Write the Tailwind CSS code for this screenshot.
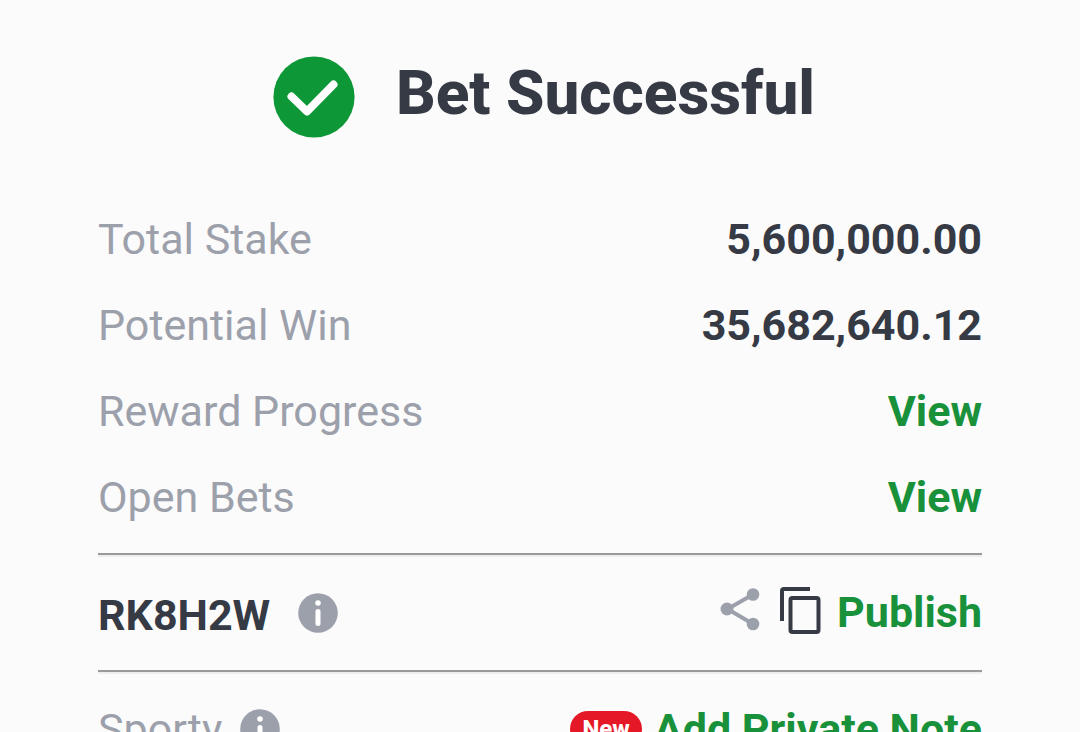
<!DOCTYPE html>
<html lang="en">
<head>
<meta charset="utf-8">
<meta name="viewport" content="width=device-width, initial-scale=1">
<title>Bet Successful</title>
<script src="https://cdn.jsdelivr.net/npm/@tailwindcss/browser@4"></script>
</head>
<body class="h-screen overflow-hidden bg-[#fbfbfb] font-[Roboto,sans-serif] text-[#353a45]">
<main class="px-[98px] pt-12 text-[43px] leading-[50px]">
  <header class="flex items-center justify-center gap-[41px] pl-2">
    <svg class="mt-2 size-[82px]" viewBox="0 0 82 82" aria-hidden="true">
      <circle cx="41" cy="41" r="40.6" fill="#0d9737"/>
      <path d="M18.5 40.5 L34 55.5 L60.5 28.5" fill="none" stroke="#fff" stroke-width="8" stroke-linecap="round" stroke-linejoin="round"/>
    </svg>
    <h1 class="text-[62px] leading-[82px] font-extrabold">Bet Successful</h1>
  </header>
  <dl class="pt-[58px]">
    <div class="flex h-[86px] items-center justify-between">
      <dt class="text-[#9ca0ab]">Total Stake</dt>
      <dd class="font-bold">5,600,000.00</dd>
    </div>
    <div class="flex h-[86px] items-center justify-between">
      <dt class="text-[#9ca0ab]">Potential Win</dt>
      <dd class="font-bold">35,682,640.12</dd>
    </div>
    <div class="flex h-[86px] items-center justify-between">
      <dt class="text-[#9ca0ab]">Reward Progress</dt>
      <dd><a href="#rewards" class="font-bold text-[#18913a]">View</a></dd>
    </div>
    <div class="flex h-[86px] items-center justify-between">
      <dt class="text-[#9ca0ab]">Open Bets</dt>
      <dd><a href="#bets" class="font-bold text-[#18913a]">View</a></dd>
    </div>
  </dl>
  <hr class="mt-[13px] h-1 border-t-2 border-b-2 border-t-[#99999b] border-b-[#eeeeee]">
  <section class="flex h-[113px] items-center justify-between">
    <div class="flex items-center gap-7 pb-0.5">
      <span class="pt-1 font-bold">RK8H2W</span>
      <button type="button" aria-label="About booking code">
        <svg class="size-10" viewBox="0 0 40 40"><circle cx="20" cy="20" r="19.8" fill="#9ca0ab"/><circle cx="20" cy="10" r="2.8" fill="#fff"/><path d="M20 18.5V30.5" stroke="#fff" stroke-width="5" stroke-linecap="round"/></svg>
      </button>
    </div>
    <div class="flex items-center pb-1">
      <button type="button" aria-label="Share" class="mr-[19px] pb-1">
        <svg class="h-[43px] w-10" viewBox="0 0 40 43" fill="#9ca0ab"><path d="M33 6.5L7.5 21L33 36" fill="none" stroke="#9ca0ab" stroke-width="4"/><circle cx="7" cy="21" r="6.5"/><circle cx="33" cy="6.5" r="6.3"/><circle cx="33" cy="36" r="6.3"/></svg>
      </button>
      <button type="button" aria-label="Copy code" class="mr-4 pb-1">
        <svg class="h-12 w-[42px]" viewBox="0 0 42 48" fill="none" stroke="#353a45" stroke-width="4"><path d="M3 35V5Q3 3 5 3H31"/><rect x="11.5" y="12" width="28" height="34" rx="2"/></svg>
      </button>
      <button type="button" class="font-bold text-[#18913a]">Publish</button>
    </div>
  </section>
  <hr class="h-1 border-t-2 border-b-2 border-t-[#99999b] border-b-[#eeeeee]">
  <section class="flex h-[110px] items-center justify-between">
    <div class="flex items-center gap-[18px]">
      <span class="text-[#9ca0ab]">Sporty</span>
      <button type="button" aria-label="About Sporty">
        <svg class="size-10" viewBox="0 0 40 40"><circle cx="20" cy="20" r="19.8" fill="#9ca0ab"/><circle cx="20" cy="10" r="2.8" fill="#fff"/><path d="M20 18.5V30.5" stroke="#fff" stroke-width="5" stroke-linecap="round"/></svg>
      </button>
    </div>
    <div class="flex items-center gap-3">
      <span class="rounded-full bg-[#e41827] px-3 text-[24px] leading-[36px] font-extrabold text-white">New</span>
      <button type="button" class="font-bold text-[#18913a]">Add Private Note</button>
    </div>
  </section>
</main>
</body>
</html>
